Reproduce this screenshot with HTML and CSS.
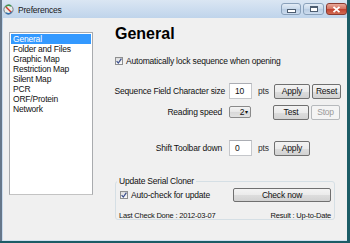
FILE: index.html
```html
<!DOCTYPE html>
<html>
<head>
<meta charset="utf-8">
<title>Preferences</title>
<link rel="stylesheet" href="styles.css">
</head>
<body>

<div class="window">

<div class="titlebar">
<svg class="app-icon" width="11" height="11" viewBox="0 0 11 11">
<circle cx="5.5" cy="5.5" r="4.6" fill="#e9ece8" stroke="#6f7a80" stroke-width="1"/>
<path d="M2.4 3.2 A3.6 3.6 0 0 1 8 2.2" fill="none" stroke="#3c9a4a" stroke-width="1.3"/>
<path d="M8.7 7.6 A3.6 3.6 0 0 1 3 8.8" fill="none" stroke="#2f6fb0" stroke-width="1.3"/>
<path d="M3 3 L8 8" stroke="#d23a2c" stroke-width="1.4"/>
</svg>
<span class="title">Preferences</span>
<div class="caption-buttons">
<span class="cap-btn min"><i></i></span>
<span class="cap-btn max"><i></i></span>
<span class="cap-btn close">
<svg width="9" height="7" viewBox="0 0 9 7"><path d="M1.5 0.8 L7.5 6.2 M7.5 0.8 L1.5 6.2" stroke="#fff" stroke-width="1.8"/></svg>
</span>
</div>
</div>

<div class="client">

<ul class="pref-list">
<li class="selected">General</li>
<li>Folder and Files</li>
<li>Graphic Map</li>
<li>Restriction Map</li>
<li>Silent Map</li>
<li>PCR</li>
<li>ORF/Protein</li>
<li>Network</li>
</ul>

<div class="panel">

<h1>General</h1>

<label class="check lock">
<span class="box"><svg width="6" height="6" viewBox="0 0 6 6"><path d="M0.6 3.2 L2.3 5 L5.4 0.6" fill="none" stroke="#3b4f8c" stroke-width="1.2"/></svg></span>
Automatically lock sequence when opening
</label>

<div class="setting-row first">
<span class="label">Sequence Field Character size</span>
<span class="field">10</span>
<span class="unit">pts</span>
<span class="btn apply">Apply</span>
<span class="btn reset">Reset</span>
</div>

<div class="setting-row second">
<span class="label narrow">Reading speed</span>
<span class="combo">2<b>&#9662;</b></span>
<span class="unit"></span>
<span class="btn apply">Test</span>
<span class="btn reset disabled">Stop</span>
</div>

<div class="setting-row third">
<span class="label narrow">Shift Toolbar down</span>
<span class="field">0</span>
<span class="unit">pts</span>
<span class="btn apply">Apply</span>
</div>

<fieldset class="group">
<legend>Update Serial Cloner</legend>
<div class="group-row">
<label class="check">
<span class="box"><svg width="6" height="6" viewBox="0 0 6 6"><path d="M0.6 3.2 L2.3 5 L5.4 0.6" fill="none" stroke="#3b4f8c" stroke-width="1.2"/></svg></span>
Auto-check for update
</label>
<span class="btn wide">Check now</span>
</div>
<div class="group-row status">
<span>Last Check Done : 2012-03-07</span>
<span>Result : Up-to-Date</span>
</div>
</fieldset>

</div>

</div>

</div>

</body>
</html>
```

FILE: styles.css
```css
body {
margin: 0;
width: 350px;
height: 243px;
overflow: hidden;
background: #1c5c66;
font-family: "Liberation Sans", Arial, sans-serif;
font-size: 8.5px;
letter-spacing: -0.2px;
color: #111;
}

.window {
width: 347px;
height: 241px;
box-sizing: border-box;
border-left: 2px solid #66778a;
background: linear-gradient(#dae6f3, #bfd4eb 18px, #c9dbee 30px);
display: flex;
flex-direction: column;
}

/* title bar */

.titlebar {
height: 18px;
display: flex;
align-items: center;
padding-left: 1px;
}

.app-icon { margin-right: 4px; margin-top: 1px; flex-shrink: 0; }

.title {
font-size: 8.5px;
color: #1a1a1a;
margin-top: 1px;
}

.caption-buttons {
margin-left: auto;
display: flex;
align-self: flex-start;
margin-top: 3px;
}

.cap-btn {
flex-shrink: 0;
height: 12px;
box-sizing: border-box;
border: 1px solid #8aa1ba;
border-radius: 3px;
background: linear-gradient(#e3ecf6, #c7d8ea 50%, #b8cce2 51%, #cddcee);
display: flex;
align-items: center;
justify-content: center;
margin-left: 2px;
}

.min { width: 20px; }
.max { width: 21px; }
.close {
width: 21px;
border-color: #8b3b31;
background: linear-gradient(#e9a899, #d3705f 50%, #c2412f 51%, #d06a52);
}

.min i {
display: block;
width: 7px;
height: 2px;
border: 1px solid #4d5d70;
background: #fff;
margin-top: 3px;
}

.max i {
display: block;
width: 6px;
height: 3px;
border: 1px solid #4d5d70;
border-top-width: 2px;
background: #fff;
}

/* client area */

.client {
flex: 1;
margin-left: 1px;
background: #f0f0f0;
border-bottom: 1px solid #cfe0f0;
display: flex;
}

.pref-list {
list-style: none;
margin: 14px 0 0 6px;
padding: 1px;
width: 80px;
height: 159px;
background: #fff;
border: 1px solid #a9abae;
border-bottom-color: #c3c3c3;
}

.pref-list li {
height: 10px;
line-height: 10px;
padding-left: 2px;
white-space: nowrap;
}

.pref-list .selected {
background: #3399ff;
color: #fff;
}

.panel {
margin-left: 22px;
padding-top: 8px;
width: 222px;
}

h1 {
margin: 0;
font-size: 16px;
line-height: 16px;
letter-spacing: 0;
font-weight: bold;
color: #000;
}

.check {
display: flex;
align-items: center;
height: 10px;
white-space: nowrap;
}

.lock { margin-top: 14px; }

.box {
flex-shrink: 0;
width: 8px;
height: 8px;
box-sizing: border-box;
border: 1px solid #8e8f8f;
background: linear-gradient(#dcdcdc, #fbfbfb);
margin-right: 3px;
display: flex;
align-items: center;
justify-content: center;
}

/* settings rows */

.setting-row {
display: flex;
align-items: center;
height: 16px;
}

.first { margin-top: 17px; }
.second { margin-top: 5px; }
.third { margin-top: 20px; }

.label {
flex-shrink: 0;
width: 120px;
margin-left: -10px;
margin-right: 4px;
text-align: right;
white-space: nowrap;
}

.narrow { width: 117px; margin-right: 7px; }

.field {
flex-shrink: 0;
width: 23px;
height: 16px;
box-sizing: border-box;
background: #fff;
border: 1px solid #c5c7cb;
border-top-color: #abadb3;
padding-left: 5px;
line-height: 14px;
}

.combo {
flex-shrink: 0;
width: 22px;
height: 12px;
box-sizing: border-box;
border: 1px solid #8a8a8a;
border-radius: 2px;
background: linear-gradient(#f4f4f4, #e6e6e6 50%, #d8d8d8 51%, #e2e2e2);
display: flex;
align-items: center;
justify-content: flex-end;
padding-right: 2px;
line-height: 10px;
}

.combo b {
font-weight: normal;
font-size: 6px;
margin-left: 1px;
}

.unit {
flex-shrink: 0;
width: 10px;
margin: 0 6px;
color: #333;
}

.btn {
flex-shrink: 0;
height: 15px;
box-sizing: border-box;
border: 1px solid #707070;
border-radius: 2px;
background: linear-gradient(#f3f3f3, #ebebeb 50%, #dddddd 51%, #d2d2d2);
display: flex;
align-items: center;
justify-content: center;
color: #111;
}

.apply { width: 36px; }
.reset { width: 29px; margin-left: 2px; }

.disabled {
border-color: #b6b9bc;
background: #f4f4f4;
color: #9a9a9a;
}

/* update group */

.group {
margin: 20px 0 0 0;
width: 220px;
height: 44px;
box-sizing: border-box;
border: 1px solid #d5dfe5;
border-radius: 3px;
padding: 0 3px 0 3px;
}

.group legend {
padding: 0 2px;
margin-left: -2px;
line-height: 10px;
}

.group-row {
display: flex;
align-items: center;
justify-content: space-between;
margin-top: 2px;
}

.group-row .check { margin-left: 1px; }

.wide {
width: 98px;
height: 14px;
}

.status {
margin-top: 9px;
font-size: 7.5px;
}
```
